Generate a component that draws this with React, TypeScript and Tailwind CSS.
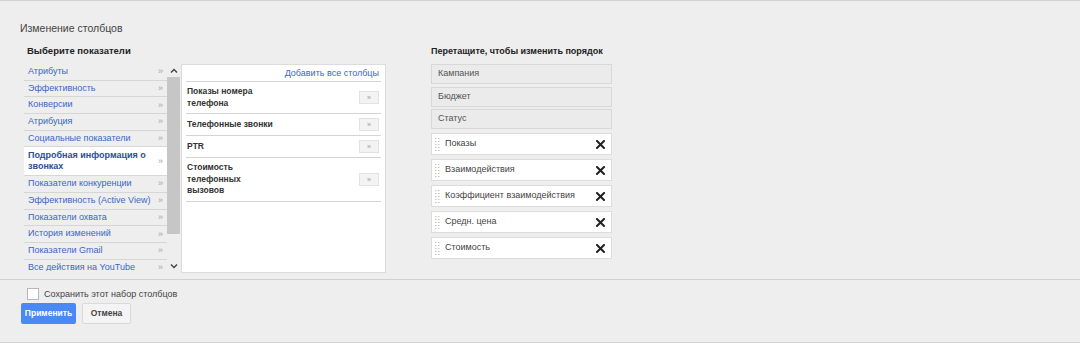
import React from 'react';

const font = "font-['Liberation_Sans',Arial,sans-serif]";

const categories = [
  'Атрибуты',
  'Эффективность',
  'Конверсии',
  'Атрибуция',
  'Социальные показатели',
  'Подробная информация о звонках',
  'Показатели конкуренции',
  'Эффективность (Active View)',
  'Показатели охвата',
  'История изменений',
  'Показатели Gmail',
  'Все действия на YouTube',
];

const selected = 'Подробная информация о звонках';

const metrics = [
  'Показы номера телефона',
  'Телефонные звонки',
  'PTR',
  'Стоимость телефонных вызовов',
];

const fixedCols = ['Кампания', 'Бюджет', 'Статус'];
const movableCols = ['Показы', 'Взаимодействия', 'Коэффициент взаимодействия', 'Средн. цена', 'Стоимость'];

const Grip = () => (
  <svg width="5" height="13" viewBox="0 0 5 13" className="shrink-0">
    {[0, 3, 6, 9, 12].map((y) => (
      <g key={y} fill="#c4c4c4">
        <rect x="0" y={y} width="1.5" height="1" />
        <rect x="3" y={y} width="1.5" height="1" />
      </g>
    ))}
  </svg>
);

const Cross = () => (
  <svg width="9" height="9" viewBox="0 0 9 9" className="shrink-0">
    <path d="M1 1 L8 8 M8 1 L1 8" stroke="#222" strokeWidth="2" strokeLinecap="square" />
  </svg>
);

const Chevron = ({ up }: { up?: boolean }) => (
  <svg width="8" height="5" viewBox="0 0 8 5">
    <path d={up ? 'M1 4.5 L4 1.5 L7 4.5' : 'M1 0.5 L4 3.5 L7 0.5'} fill="none" stroke="#444" strokeWidth="1.4" />
  </svg>
);

export default function App() {
  return (
    <div className={`${font} h-[343px] w-[1080px] overflow-hidden border-y border-[#d3d3d3] bg-[#eeeeee] text-[#333]`}>
      <div className="h-[278px] px-[20px] pt-[20px]">
        <h1 className="text-[10.5px] leading-[15px] text-[#444]">Изменение столбцов</h1>
        <div className="mt-[9px] flex">
          <div className="ml-[4px] w-[362px]">
            <h2 className="pl-[3px] text-[9.5px] font-bold leading-[12px] text-[#222]">Выберите показатели</h2>
            <div className="mt-[7px] flex h-[209px]">
              <ul className="h-[207px] w-[143px] overflow-hidden">
                {categories.map((c) => {
                  const active = c === selected;
                  return (
                    <li
                      key={c}
                      className={`flex items-center justify-between border-b border-[#d6d6d6] pl-[4px] pr-[4px] ${
                        active ? 'h-[28.7px] bg-white font-bold text-[#2a4f94]' : 'h-[16.7px] text-[#3a66c4]'
                      }`}
                    >
                      <span className={`text-[9px] leading-[11.5px] ${active ? 'w-[122px]' : ''}`}>{c}</span>
                      <span className="text-[9px] font-normal leading-none text-[#a5a5a5]">»</span>
                    </li>
                  );
                })}
              </ul>
              <div className="flex h-full w-[13px] flex-col items-center">
                <div className="flex h-[13px] items-center justify-center">
                  <Chevron up />
                </div>
                <div className="h-[157px] w-full bg-[#c6c6c6]" />
                <div className="flex-1" />
                <div className="flex h-[13px] items-center justify-center">
                  <Chevron />
                </div>
              </div>
              <div className="ml-[1px] h-[209px] flex-1 border border-[#dcdcdc] bg-white px-[4px]">
                <div className="flex h-[17px] items-end justify-end border-b border-[#d4d4d4] pb-[2px] pr-[2px]">
                  <span className="text-[9px] leading-[11px] text-[#3a66c4]">Добавить все столбцы</span>
                </div>
                {metrics.map((m) => (
                  <div key={m} className="flex items-center justify-between border-b border-[#d4d4d4] py-[4px] pl-[1px] pr-[2px]">
                    <span className="w-[92px] text-[8.5px] font-bold leading-[11.5px] text-[#333]">{m}</span>
                    <span className="flex h-[13px] w-[20px] items-center justify-center border border-[#e2e2e2] bg-[#f3f3f3] text-[7px] leading-none text-[#999]">
                      »
                    </span>
                  </div>
                ))}
              </div>
            </div>
          </div>
          <div className="ml-[45px] w-[181px]">
            <h2 className="whitespace-nowrap text-[9px] font-bold leading-[12px] text-[#222]">Перетащите, чтобы изменить порядок</h2>
            <div className="mt-[7px] flex flex-col gap-[2.5px]">
              {fixedCols.map((c) => (
                <div key={c} className="flex h-[20px] items-center border border-[#d8d8d8] bg-[#ebebeb] pl-[6px] text-[9px] text-[#555]">
                  {c}
                </div>
              ))}
            </div>
            <div className="mt-[4px] flex flex-col gap-[4px]">
              {movableCols.map((c) => (
                <div key={c} className="flex h-[22px] items-center border border-[#dcdcdc] bg-white pl-[3px] pr-[6px]">
                  <Grip />
                  <span className="ml-[5px] flex-1 text-[9px] text-[#444]">{c}</span>
                  <Cross />
                </div>
              ))}
            </div>
          </div>
        </div>
      </div>
      <div className="border-t border-[#d0d0d0] px-[21px] pt-[8px]">
        <label className="ml-[6px] flex items-center gap-[5px]">
          <span className="h-[12px] w-[12px] border border-[#b8b8b8] bg-white" />
          <span className="text-[9px] leading-[12px] text-[#444]">Сохранить этот набор столбцов</span>
        </label>
        <div className="mt-[3px] flex gap-[6px]">
          <button className="h-[21px] w-[55px] rounded-[2px] bg-[#4a89f3] text-[8.5px] font-bold text-white">Применить</button>
          <button className="h-[21px] w-[49px] rounded-[2px] border border-[#dadada] bg-[#f4f4f4] text-[8.5px] font-bold text-[#444]">
            Отмена
          </button>
        </div>
      </div>
    </div>
  );
}
